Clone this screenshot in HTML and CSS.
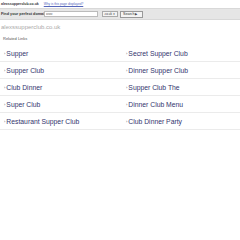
FILE: index.html
```html
<!DOCTYPE html>
<html>
<head>
<meta charset="utf-8">
<link rel="stylesheet" href="styles.css">
</head>
<body>
<div class="top">
  <span class="site">alexssupperclub.co.uk</span>
  <a class="why" href="#">Why is this page displayed?</a>
</div>
<div class="bar">
  <span class="find">Find your perfect domain:</span>
  <input class="inp" type="text" value="www">
  <span class="sel">.co.uk <span class="arr">▼</span></span>
  <span class="btn">Search <span class="tri">▶</span></span>
</div>
<div class="domain">alexssupperclub.co.uk</div>
<div class="related">Related Links</div>
<div class="links">
  <div class="row"><a href="#">Supper</a></div>
  <div class="row"><a href="#">Secret Supper Club</a></div>
  <div class="row"><a href="#">Supper Club</a></div>
  <div class="row"><a href="#">Dinner Supper Club</a></div>
  <div class="row"><a href="#">Club Dinner</a></div>
  <div class="row"><a href="#">Supper Club The</a></div>
  <div class="row"><a href="#">Super Club</a></div>
  <div class="row"><a href="#">Dinner Club Menu</a></div>
  <div class="row"><a href="#">Restaurant Supper Club</a></div>
  <div class="row"><a href="#">Club Dinner Party</a></div>
</div>
</body>
</html>
```
FILE: styles.css
```css
body {
  margin: 0;
  font-family: "Liberation Sans", Arial, sans-serif;
  background: #fff;
}
.top {
  height: 8px;
  display: flex;
  align-items: center;
  gap: 5px;
  padding-left: 1px;
  line-height: 8px;
  white-space: nowrap;
}
.site { font-weight: bold; color: #333; font-size: 3.5px; }
.why { color: #5566bb; text-decoration: underline; font-size: 3.2px; }
.bar {
  height: 10px;
  background: #e6e6e6;
  border-top: 1px solid #d8d8d8;
  border-bottom: 1px solid #d8d8d8;
  display: flex;
  align-items: center;
  padding-left: 1px;
  white-space: nowrap;
}
.find { font-weight: bold; color: #333; width: 43px; font-size: 3.8px; }
.inp {
  box-sizing: border-box;
  width: 54px;
  height: 6px;
  border: 1px solid #bbb;
  padding: 0 1px;
  font-size: 3px;
  font-family: inherit;
  color: #666;
  margin: 0;
}
.sel {
  box-sizing: border-box;
  margin-left: 4px;
  width: 16px;
  height: 6px;
  border: 1px solid #aaa;
  background: #f4f4f4;
  font-size: 3px;
  line-height: 4px;
  padding-left: 1px;
  color: #333;
}
.arr { font-size: 2.5px; }
.btn {
  box-sizing: border-box;
  margin-left: 2px;
  width: 23px;
  height: 7px;
  border: 1px solid #999;
  background: #f4f4f4;
  font-size: 3.6px;
  line-height: 5px;
  padding-left: 2px;
  color: #333;
}
.tri { font-size: 2.5px; }
.domain {
  margin-top: 3px;
  padding-left: 1px;
  font-size: 6px;
  line-height: 9px;
  color: #aaa;
}
.related {
  margin-top: 4px;
  padding-left: 3px;
  font-size: 4px;
  line-height: 6px;
  color: #555;
}
.links {
  margin-top: 3px;
  display: grid;
  grid-template-columns: 122px 118px;
}
.row {
  height: 16px;
  border-bottom: 1px solid #ebebeb;
  display: flex;
  align-items: center;
  padding-left: 4px;
  font-size: 6.8px;
}
.row a { color: #33346e; text-decoration: none; }
.row a::before { content: "\203A"; font-size: 4px; color: #666; margin-right: 1px; vertical-align: 1px; }
```
